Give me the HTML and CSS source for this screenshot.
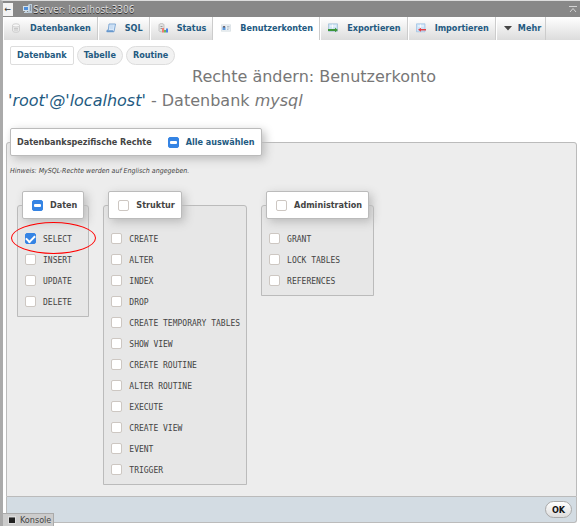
FILE: index.html
```html
<!DOCTYPE html>
<html lang="de">
<head>
<meta charset="utf-8">
<meta name="viewport" content="width=device-width, initial-scale=1">
<title>Rechte ändern</title>
<link rel="stylesheet" href="styles.css">
</head>
<body>
<header class="serverbar">
  <button class="collapse" type="button" aria-label="Navigation">←</button>
  <svg class="server-icon" viewBox="0 0 10 10" aria-hidden="true"><path fill="#b9cad8" d="M6 0h3v9H5V1z"/><path fill="#8797a8" d="M7 1h1v6H7z"/><path fill="#d3e0ea" d="M0 2h6v5H0z"/><path fill="#4d8edb" d="M1 3h4v3H1z"/><path fill="#c4d4e0" d="M2 7h2v1h1v1H1V8h1z"/></svg>
  <a class="server-name" href="#">Server: localhost:3306</a>
  <svg class="goto-top" viewBox="0 0 8 8" aria-hidden="true"><path fill="none" stroke="#d4d4d4" d="M0 1.500h8M1 7l3-3.500L7 7"/></svg>
</header>
<nav class="tabs">
  <a class="tab" href="#"><svg class="icon" viewBox="0 0 10 10" aria-hidden="true"><path fill="#e9e9e9" stroke="#c2c2c2" stroke-width=".7" d="M1.500 2.500v5c0 2.400 7 2.400 7 0v-5"/><ellipse cx="5" cy="2.400" rx="3.500" ry="1.600" fill="#f7f7f7" stroke="#c2c2c2" stroke-width=".7"/><path fill="none" stroke="#bbb" stroke-width=".7" d="M3 5.500h4M3 7h4"/></svg>Datenbanken</a>
  <a class="tab" href="#"><svg class="icon" viewBox="0 0 10 10" aria-hidden="true"><path fill="#d9e9fa" stroke="#76a2d0" stroke-width=".9" d="M3 1h6.500L8 8.800H.8L1.300 7h1z"/><path stroke="#a9c7e6" stroke-width=".6" d="M4 3h3.500M3.700 5h3.500"/><path fill="#6697cc" d="M.8 7.300h6L8 9H.8z"/></svg>SQL</a>
  <a class="tab" href="#"><svg class="icon" viewBox="0 0 10 10" aria-hidden="true"><path fill="#e2e2e2" stroke="#aaa" stroke-width=".6" d="M1 1.800C1 .2 6 .2 6 1.800v6c0 1.400-5 1.400-5 0z"/><path fill="#999" d="M2.500 3h2v1h-2zM2.500 5h2v1h-2z"/><path fill="#ee7c70" d="M4 5h2v4.500H4z"/><path fill="#6db85f" d="M6 7h2v2.500H6z"/><path fill="#4a83e8" d="M8 5.500h2v4H8z"/></svg>Status</a>
  <a class="tab active" href="#" aria-current="page"><svg class="icon" viewBox="0 0 10 10" aria-hidden="true"><path fill="#edf2f6" stroke="#cbd3da" stroke-width=".6" d="M.3 1.800h9.400v6.400H.3z"/><path fill="#5c99dd" d="M1.500 3.500h3V7h-3z"/><path fill="#6a4939" d="M2.300 3h1.500v1.600H2.300z"/><path stroke="#a1afba" stroke-width=".7" d="M6 3.500h2.500M6 5h2.500M6 6.500h1.500"/></svg>Benutzerkonten</a>
  <a class="tab" href="#"><svg class="icon" viewBox="0 0 10 10" aria-hidden="true"><path fill="#cde3f5" stroke="#92b3ce" stroke-width=".6" d="M.5.800h9v7.500h-9z"/><path stroke="#fff" stroke-width=".8" d="M2 3h6M4.500 1.500v4"/><path fill="#3d963b" d="M0 6h7V4.800L10 7 7 9.200V8H0z"/></svg>Exportieren</a>
  <a class="tab" href="#"><svg class="icon" viewBox="0 0 10 10" aria-hidden="true"><path fill="#cde3f8" stroke="#8fb7de" stroke-width=".6" d="M.5.800h8.500v8H.5z"/><path stroke="#fff" stroke-width=".8" d="M2 3h6M4.500 1.500v6"/><path fill="#df4148" d="M10 6H5V4.800L2 6.700l3 2V7.500h5z"/></svg>Importieren</a>
  <a class="tab more" href="#"><svg class="icon" viewBox="0 0 10 10" aria-hidden="true"><path fill="#444" d="M1 3h8L5 7.500z"/></svg>Mehr</a>
</nav>
<main class="page">
  <nav class="subtabs">
    <a class="subtab current" href="#">Datenbank</a>
    <a class="subtab" href="#">Tabelle</a>
    <a class="subtab" href="#">Routine</a>
  </nav>
  <h1 class="title"><span class="title-lead">Rechte ändern: Benutzerkonto</span> <a href="#"><i>'root'@'localhost'</i></a> - Datenbank <i>mysql</i></h1>
  <form>
    <fieldset class="rights">
      <legend class="rights-legend">Datenbankspezifische Rechte
        <input class="box mixed" type="checkbox" id="all"><label class="all-label" for="all">Alle auswählen</label>
      </legend>
      <p class="hint">Hinweis: MySQL-Rechte werden auf Englisch angegeben.</p>
      <div class="groups">
        <fieldset class="group">
          <legend><input class="box mixed" type="checkbox" id="daten"><label for="daten">Daten</label></legend>
          <div class="right marked"><input class="box" type="checkbox" id="r1" checked><label for="r1">SELECT</label></div>
          <div class="right"><input class="box" type="checkbox" id="r2"><label for="r2">INSERT</label></div>
          <div class="right"><input class="box" type="checkbox" id="r3"><label for="r3">UPDATE</label></div>
          <div class="right"><input class="box" type="checkbox" id="r4"><label for="r4">DELETE</label></div>
        </fieldset>
        <fieldset class="group">
          <legend><input class="box" type="checkbox" id="struktur"><label for="struktur">Struktur</label></legend>
          <div class="right"><input class="box" type="checkbox" id="s1"><label for="s1">CREATE</label></div>
          <div class="right"><input class="box" type="checkbox" id="s2"><label for="s2">ALTER</label></div>
          <div class="right"><input class="box" type="checkbox" id="s3"><label for="s3">INDEX</label></div>
          <div class="right"><input class="box" type="checkbox" id="s4"><label for="s4">DROP</label></div>
          <div class="right"><input class="box" type="checkbox" id="s5"><label for="s5">CREATE TEMPORARY TABLES</label></div>
          <div class="right"><input class="box" type="checkbox" id="s6"><label for="s6">SHOW VIEW</label></div>
          <div class="right"><input class="box" type="checkbox" id="s7"><label for="s7">CREATE ROUTINE</label></div>
          <div class="right"><input class="box" type="checkbox" id="s8"><label for="s8">ALTER ROUTINE</label></div>
          <div class="right"><input class="box" type="checkbox" id="s9"><label for="s9">EXECUTE</label></div>
          <div class="right"><input class="box" type="checkbox" id="s10"><label for="s10">CREATE VIEW</label></div>
          <div class="right"><input class="box" type="checkbox" id="s11"><label for="s11">EVENT</label></div>
          <div class="right"><input class="box" type="checkbox" id="s12"><label for="s12">TRIGGER</label></div>
        </fieldset>
        <fieldset class="group">
          <legend><input class="box" type="checkbox" id="admin"><label for="admin">Administration</label></legend>
          <div class="right"><input class="box" type="checkbox" id="a1"><label for="a1">GRANT</label></div>
          <div class="right"><input class="box" type="checkbox" id="a2"><label for="a2">LOCK TABLES</label></div>
          <div class="right"><input class="box" type="checkbox" id="a3"><label for="a3">REFERENCES</label></div>
        </fieldset>
      </div>
    </fieldset>
    <div class="submit"><button class="ok" type="submit">OK</button></div>
  </form>
</main>
<button class="console" type="button"><svg class="console-icon" viewBox="0 0 8 8" aria-hidden="true"><path fill="#ddd" d="M0 0h8v8H0z"/><path fill="#222" d="M1 2h6v5H1z"/><path fill="#777" d="M1 1h6v1H1z"/></svg>Konsole</button>
</body>
</html>
```
FILE: styles.css
```css
* { box-sizing: border-box; }
body {
  margin: 0;
  min-height: 100vh;
  border-left: 3px solid #aaa;
  border-top: 1px solid #ddd;
  background: #fff;
  color: #444;
  font-family: "DejaVu Sans Condensed", "DejaVu Sans", sans-serif;
  font-size: 9px;
}
a { color: #235a81; text-decoration: none; }
button { font-family: inherit; }
.serverbar {
  display: flex;
  align-items: center;
  height: 16px;
  padding-right: 3px;
  background: #888;
}
.collapse {
  width: 10px;
  height: 13px;
  padding: 0;
  border: 0;
  background: #f3f3f3;
  color: #333;
  font-size: 9px;
  line-height: 13px;
}
.server-icon { width: 10px; height: 10px; margin-left: 10px; }
.server-name { flex: 1; color: #ddd; font-size: 10px; text-shadow: 0 1px 0 #333; }
.goto-top { width: 8px; height: 8px; }
.tabs {
  display: flex;
  height: 23px;
  background: linear-gradient(#fff, #dcdcdc);
}
.tab {
  display: flex;
  align-items: center;
  gap: 9px;
  padding: 0 6px 2px 7px;
  border-right: 1px solid #ccc;
  border-left: 1px solid #fff;
  font-weight: bold;
}
.tab.active { background: #fff; }
.tab.more { gap: 5px; padding-right: 4px; padding-left: 6px; }
.icon { width: 10px; height: 10px; }
.page { padding: 6px 3px 0; }
.subtabs { display: flex; gap: 3px; padding-left: 4px; }
.subtab {
  height: 19px;
  padding: 0 6px;
  border: 1px solid #ddd;
  border-radius: 10px;
  background: #f2f2f2;
  font-weight: bold;
  line-height: 17px;
}
.subtab.current { border-radius: 2px; background: #fff; }
.title {
  margin: 0 2px;
  color: #777;
  font-family: "DejaVu Sans", sans-serif;
  font-size: 16px;
  font-weight: normal;
  line-height: 24px;
}
.title-lead { display: block; padding-left: 184px; }
.rights, .group {
  margin: 0;
  border: 1px solid #bbb;
  border-radius: 3px 3px 0 0;
}
.rights { margin-top: 15px; padding: 0 10px 11px 3px; background: #ededed; }
legend {
  display: flex;
  align-items: center;
  height: 28px;
  border: 1px solid #bbb;
  border-radius: 2px;
  background: #fff;
  box-shadow: 3px 3px 10px #bbb;
  font-weight: bold;
}
.rights-legend { gap: 7px; padding: 0 6px; }
.rights-legend .box { margin-left: 9px; }
.all-label { color: #235a81; }
.hint {
  margin: 9px 0 14px;
  font-size: 7px;
  font-style: italic;
  line-height: 12px;
}
.groups { display: flex; align-items: flex-start; gap: 14px; padding-left: 7px; }
.group { min-width: 0; padding: 9px 4px 4px; background: #e7e7e7; }
.group legend { gap: 7px; padding: 0 6px 0 9px; }
.right {
  display: flex;
  align-items: center;
  gap: 7px;
  height: 21px;
  padding: 0 2px 0 3px;
  font-family: "DejaVu Sans Mono", monospace;
  font-size: 8px;
}
.right label { padding-top: 1px; }
.box {
  appearance: none;
  flex: none;
  width: 11px;
  height: 11px;
  margin: 0;
  border: 1px solid #cdc7c2;
  border-radius: 2px;
  background: #fff;
}
.box.mixed, .box:checked {
  display: grid;
  place-items: center;
  border-color: #3584e4;
  background: #3584e4;
}
.box.mixed::before { content: ""; width: 7px; height: 3px; border-radius: 1px; background: #fff; }
.box:checked::before {
  content: "";
  width: 7px;
  height: 4px;
  border: solid #fff;
  border-width: 0 0 2px 2px;
  transform: translateY(-1px) rotate(-45deg);
}
.marked { position: relative; }
.marked::after {
  content: "";
  position: absolute;
  top: -6px;
  left: -11px;
  width: 83px;
  height: 30px;
  border: 1px solid #f00;
  border-radius: 50%;
  pointer-events: none;
  z-index: 1;
}
.submit {
  display: flex;
  justify-content: flex-end;
  align-items: center;
  height: 26px;
  padding-right: 4px;
  border: 1px solid #bbb;
  border-top: 0;
  border-radius: 0 0 3px 3px;
  background: #d3dce3;
}
.ok {
  width: 27px;
  height: 17px;
  padding: 0;
  border: 1px solid #aaa;
  border-radius: 9px;
  background: linear-gradient(#fff, #ddd);
  color: #111;
  font-size: 9px;
  font-weight: bold;
}
.console {
  position: fixed;
  bottom: 0;
  left: 3px;
  display: flex;
  align-items: center;
  gap: 4px;
  height: 13px;
  padding: 0 2px 0 5px;
  border: 1px solid #aaa;
  border-width: 1px 1px 0 0;
  background: #ccc;
  color: #444;
  font-size: 9px;
}
.console-icon { width: 8px; height: 8px; }
```
